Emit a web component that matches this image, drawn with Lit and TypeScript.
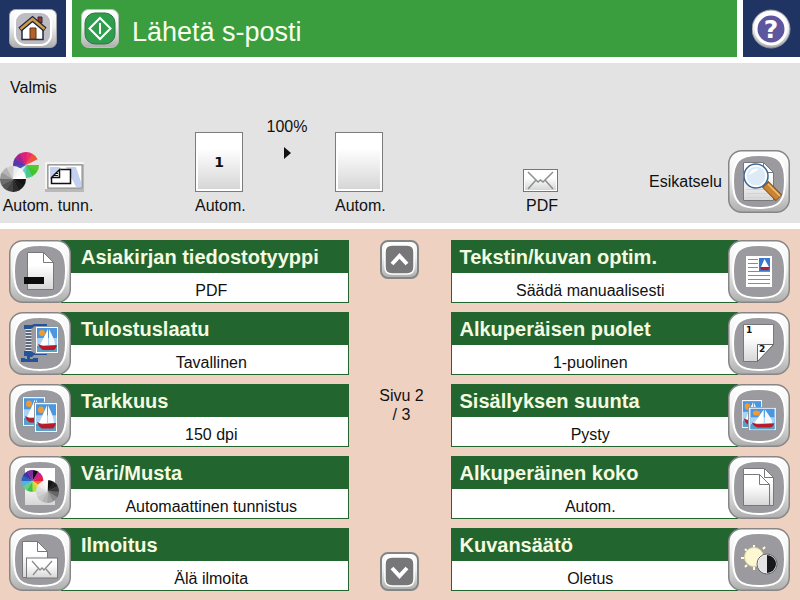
import { LitElement, html, svg, css, TemplateResult } from "lit";
import { customElement, property } from "lit/decorators.js";

type Drawing = TemplateResult;

/** A disc cut into equal coloured wedges. */
const wheel = (cx: number, cy: number, r: number, colors: string[]): Drawing => {
  const step = (Math.PI * 2) / colors.length;
  const at = (a: number) => `${(cx + r * Math.sin(a)).toFixed(2)} ${(cy - r * Math.cos(a)).toFixed(2)}`;
  return svg`${colors.map((c, i) =>
    c === "none"
      ? svg``
      : svg`<path fill=${c} d="M${cx} ${cy}L${at(i * step)}A${r} ${r} 0 0 1 ${at((i + 1) * step + 0.06)}Z"></path>`
  )}`;
};

const GREYS = ["#111", "#222", "#3a3a3a", "#666", "#8a8a8a", "#a2a2a2", "#b4b4b4", "#c4c4c4", "#d2d2d2", "#dedede", "#eee", "#f8f8f8"];

/** A small framed picture of a sailing boat. */
const photo = (x: number, y: number, w: number, h: number): Drawing => svg`
  <svg x=${x} y=${y} width=${w} height=${h} viewBox="0 0 24 28" preserveAspectRatio="none">
    <rect x="0.500" y="0.500" width="23" height="27" fill="#fff" stroke="#8f9aa8"></rect>
    <rect x="2" y="2" width="20" height="24" fill="#4a96e0"></rect>
    <path d="M2 12H22V20H2Z" fill="#a9d3f3"></path>
    <path d="M2 22H22V26H2Z" fill="#5aa0c4"></path>
    <circle cx="7" cy="7" r="3" fill="#f29a2b"></circle>
    <path d="M13 3L5 19H13Z" fill="#fff"></path>
    <path d="M14 3C17 9 20 14 20 19H14Z" fill="#f4f7fb"></path>
    <path d="M3 18L8 20L22 19C21 22 20 24 18 24H8C6 23 4 21 3 18Z" fill="#b81a28"></path>
  </svg>`;

const page = (x: number, y: number, r: number, b: number, f: number): Drawing => svg`
  <path d="M${x} ${y}H${r - f}L${r} ${y + f}V${b}H${x}Z" fill="url(#paper)" stroke="#77777c"></path>
  <path d="M${r - f} ${y}V${y + f}H${r}Z" fill="#fff" stroke="#77777c"></path>`;

const icons: Record<string, Drawing> = {
  file: svg`${page(18.5, 12.5, 44.5, 49.5, 10)}
    <rect x="15" y="37" width="20" height="7" fill="#0c0c0e"></rect>`,
  quality: svg`
    <path d="M19.500 15V43" stroke="#dfe6f2" stroke-width="6"></path>
    <path d="M16.500 19H22.500M16.500 22H22.500M16.500 25H22.500M16.500 28H22.500M16.500 31H22.500M16.500 34H22.500M16.500 37H22.500" stroke="#39424f" stroke-width="1.300"></path>
    <path d="M15 13H23L25 12H38V14H26L22 17H15ZM15 39H22L25 41H38V43H25L23 45H21V47H24V46H29V50H12V46H16V47H18V44H15Z" fill="#24539a"></path>
    ${photo(26, 14, 24, 28)}`,
  resolution: svg`${photo(13, 12, 24, 31)}${photo(25, 18, 24, 31)}`,
  color: svg`
    <path d="M16 12H46V49H16Z" fill="url(#paper)"></path>
    ${wheel(23.5, 25, 11, ["#111", "#c61f8e", "#e2204a", "#f2672a", "#f3d23a", "#b9dc3c", "#3fbf4d", "#66cf8c", "#55b5d8", "#2c63c0", "#4335a0", "#7c2ca0"])}
    ${wheel(38.5, 35.5, 11.5, GREYS)}`,
  notify: svg`${page(13.5, 13.5, 38.5, 49.5, 10)}
    <rect x="17.500" y="30" width="31" height="20" fill="url(#paper)" stroke="#77777c"></rect>
    <path d="M23 33L31 42L33 40L35 42L43 33M24 47L29 41M42 47L37 41" fill="none" stroke="#8c8c90" stroke-width="1.300"></path>`,
  optimize: svg`
    <rect x="18" y="16" width="26" height="31" fill="#fff"></rect>
    <path d="M20 19.500H30M20 23.500H30M20 27.500H30M20 31.500H42M20 35.500H42M20 39.500H42M20 43.500H42" stroke="#8a8a90"></path>
    <rect x="31" y="18" width="11" height="13" fill="#3a78cc"></rect>
    <path d="M36.500 19L33 27H41Z" fill="#fff"></path><path d="M32 27H42L40 30H33Z" fill="#b81a28"></path>`,
  sides: svg`
    <path d="M15.500 12.500H45.500V32.500L29.500 49.500H15.500Z" fill="url(#paper)" stroke="#77777c"></path>
    <path d="M29.500 49.500V32.500H45.500Z" fill="#fff" stroke="#66666a"></path>
    <text x="18" y="21" class="num">1</text><text x="31" y="40" class="num">2</text>`,
  orientation: svg`${photo(13, 15, 22, 30)}${photo(20, 23, 29, 24)}`,
  size: svg`${page(15.5, 12.5, 45.5, 49.5, 9)}${page(15.5, 18.5, 41.5, 49.5, 10)}`,
  adjust: svg`
    <path d="M26 17V19M26 39V42M13 30H16M17 21L19 23M35 21L37 19M17 39L19 37" stroke="#fffbe0" stroke-width="2"></path>
    <circle cx="26" cy="29" r="9.500" fill="#fdf8d2" stroke="#dcd6a4"></circle>
    <circle cx="39" cy="36" r="9.500" fill="#e4e4e6" stroke="#fff"></circle>
    <path d="M39 27A9 9 0 0 1 39 45Z" fill="#17181c"></path>
    <circle cx="39" cy="36" r="10" fill="none" stroke="#66666a"></circle>`,
  preview: svg`${page(15.5, 12.5, 45.5, 50.5, 10)}
    <path d="M18 39.500H42M18 43.500H42M18 47.500H42" stroke="#d4d4d8"></path>
    <path d="M37 34L51 48" stroke="#8a4e16" stroke-width="9"></path>
    <path d="M38 35L50.500 47.500" stroke="#c98432" stroke-width="7"></path>
    <path d="M40 34L52 46" stroke="#ecc27a" stroke-width="1.500"></path>
    <circle cx="28" cy="26" r="11" fill="#dcebf7" stroke="#fff" stroke-width="3"></circle>
    <circle cx="28" cy="26" r="12" fill="none" stroke="#3d6490" stroke-width="1.500"></circle>
    <path d="M21 25C22 20 26 18 31 19C28 21 25 23 21 25Z" fill="#fff"></path>`,
};

const gradients = svg`<defs>
  <linearGradient id="metal" x1="0" y1="0" x2="0" y2="1">
    <stop offset="0" stop-color="#fff"></stop><stop offset="0.450" stop-color="#f0f0f0"></stop>
    <stop offset="1" stop-color="#adadad"></stop>
  </linearGradient>
  <linearGradient id="paper" x1="0" y1="0" x2="0" y2="1">
    <stop offset="0.350" stop-color="#fff"></stop><stop offset="1" stop-color="#d6d6d6"></stop>
  </linearGradient>
</defs>`;

@customElement("key-icon")
export class KeyIcon extends LitElement {
  @property() name = "";
  static styles = css`
    :host { display: block; width: 62px; height: 63px; }
    .key { display: block; width: 100%; height: 100%; }
    .num { font: bold 9px "DejaVu Sans", sans-serif; fill: #111; }
  `;
  render() {
    return html`<svg class="key" viewBox="0 0 62 63" aria-hidden="true">
      ${gradients}
      <rect x="0.750" y="0.750" width="60.500" height="61.500" rx="13" fill="url(#metal)" stroke="#868686" stroke-width="1.500"></rect>
      <path d="M31 5C51 5 57 11 57 31C57 52 51 58 31 58C11 58 5 52 5 31C5 11 11 5 31 5Z" fill="#9b9a9f" stroke="#fff" stroke-width="2"></path>
      ${icons[this.name]}
    </svg>`;
  }
}

@customElement("option-key")
export class OptionKey extends LitElement {
  @property() icon = "";
  @property() label = "";
  @property() value = "";
  @property({ type: Boolean, reflect: true }) mirrored = false;
  static styles = css`
    :host { display: block; }
    button {
      display: grid; grid-template-columns: 62px 1fr; width: 100%; margin: 0; padding: 0;
      border: 0; background: none; color: #111; font: 16px/19px "Liberation Sans", Arial, sans-serif; cursor: pointer;
    }
    .box {
      grid-area: 1 / 1 / 2 / 3; display: grid; grid-template-rows: 32px 29px; margin-left: 52px;
      border: 1px solid #22652f; background: #fff;
    }
    .label {
      padding: 0 8px 0 19px; background: #22652f; color: #f4fbe0; text-align: left;
      font-weight: bold; font-size: 20px; line-height: 32px; white-space: nowrap;
    }
    .value { padding-left: 13px; line-height: 35px; height: 29px; text-align: center; }
    key-icon { grid-area: 1 / 1; }
    :host([mirrored]) button { grid-template-columns: 1fr 62px; }
    :host([mirrored]) .box { margin: 0 52px 0 0; }
    :host([mirrored]) .label { padding: 0 19px 0 8px; }
    :host([mirrored]) .value { padding: 0 8px 0 0; }
    :host([mirrored]) key-icon { grid-area: 1 / 2; }
  `;
  render() {
    return html`<button type="button">
      <span class="box"><span class="label">${this.label}</span><span class="value">${this.value}</span></span>
      <key-icon name=${this.icon}></key-icon>
    </button>`;
  }
}

const LEFT = [
  ["file", "Asiakirjan tiedostotyyppi", "PDF"],
  ["quality", "Tulostuslaatu", "Tavallinen"],
  ["resolution", "Tarkkuus", "150 dpi"],
  ["color", "Väri/Musta", "Automaattinen tunnistus"],
  ["notify", "Ilmoitus", "Älä ilmoita"],
];
const RIGHT = [
  ["optimize", "Tekstin/kuvan optim.", "Säädä manuaalisesti"],
  ["sides", "Alkuperäisen puolet", "1-puolinen"],
  ["orientation", "Sisällyksen suunta", "Pysty"],
  ["size", "Alkuperäinen koko", "Autom."],
  ["adjust", "Kuvansäätö", "Oletus"],
];

@customElement("app-root")
export class AppRoot extends LitElement {
  static styles = css`
    :host {
      display: block; min-height: 100vh; background: #efd1c2; color: #111;
      font: 16px/19px "Liberation Sans", Arial, sans-serif;
    }
    svg { display: block; }
    button { margin: 0; padding: 0; border: 0; background: none; color: inherit; font: inherit; cursor: pointer; }
    header { display: grid; grid-template-columns: 66px 1fr 57px; gap: 6px; height: 57px; background: #fff; }
    .corner { display: flex; align-items: center; justify-content: center; background: #203464; }
    .title { display: flex; align-items: center; gap: 13px; padding-left: 9px; background: #3a9e3e; }
    h1 { margin: 0; padding-top: 6px; font-size: 27px; line-height: 30px; font-weight: normal; color: #f8ffec; }
    .help { font: bold 25px "DejaVu Sans", sans-serif; fill: #fff; }
    .status { padding: 15px 10px 8px 0; border: solid #fff; border-width: 6px 0; background: #e3e3e3; }
    .state { margin: 0 0 20px 10px; }
    .job {
      display: grid; align-items: end; min-height: 98px;
      grid-template-columns: 96px 99fr 190px 138fr 38px 88fr 141px;
    }
    .cell { display: grid; gap: 4px; text-align: center; }
    .source { grid-column: 1; }
    .flow { grid-column: 3; align-self: stretch; display: grid; grid-template-columns: 50px 90px 50px; align-items: end; }
    .output { grid-column: 5; }
    .preview { grid-column: 7; display: flex; align-items: center; justify-content: space-between; margin-bottom: 2px; }
    .scale { display: grid; gap: 11px; justify-items: center; align-self: start; margin-right: 6px; }
    .thumb {
      box-sizing: border-box; width: 48px; height: 60px; padding: 2px; border: 1px solid #7c7c7c; background: #fff;
      font: bold 14px/54px "DejaVu Sans", sans-serif;
    }
    .sheet { height: 54px; background: linear-gradient(#fff 25%, #d6d6d6); }
    main { display: grid; grid-template-columns: 1fr 102px 1fr; padding: 11px 10px 9px 9px; }
    .options { display: grid; gap: 9px; }
    .paging { display: grid; grid-template-rows: 39px 5fr 38px 6fr 39px; justify-items: center; }
    .paging p { grid-row: 3; width: 50px; margin: 0; padding-left: 4px; text-align: center; }
    .down { grid-row: 5; }
  `;

  private arrow(d: string) {
    return html`<svg width="39" height="39" viewBox="0 0 39 39" aria-hidden="true">
      ${gradients}
      <rect x="1" y="1" width="37" height="37" rx="7" fill="url(#metal)" stroke="#858585" stroke-width="2"></rect>
      <path d="M12 5H27Q34 5 34 12V27Q34 34 27 34H12Q5 34 5 27V12Q5 5 12 5Z" fill="#77777a" stroke="#fff" stroke-width="1.500"></path>
      <path d=${d} fill="none" stroke="#fff" stroke-width="4"></path>
    </svg>`;
  }

  private options(list: string[][], mirrored: boolean) {
    return html`<div class="options">
      ${list.map(([icon, label, value]) => html`<option-key icon=${icon} label=${label} value=${value} ?mirrored=${mirrored}></option-key>`)}
    </div>`;
  }

  render() {
    return html`
      <header>
        <button class="corner" type="button" aria-label="Koti">
          <svg width="48" height="39" viewBox="0 0 48 39">
            ${gradients}
            <rect x="0.500" y="0.500" width="47" height="38" rx="6" fill="url(#metal)" stroke="#a4a4a8"></rect>
            <rect x="6" y="3" width="36" height="33" rx="10" fill="#bcbcc2" stroke="#fff" stroke-width="2"></rect>
            <path d="M29 8H33V14H29Z" fill="#9a3420" stroke="#222840"></path>
            <path d="M13 19L23.500 10L34 19V30.500H13Z" fill="#fff" stroke="#222840" stroke-width="1.500"></path>
            <path d="M21 19H27V30H21Z" fill="#b4622a" stroke="#5b3018"></path>
            <path d="M11 20.500L23.500 10L36 20.500" fill="none" stroke="#1d2340" stroke-width="5"></path>
            <path d="M11.500 20L23.500 10L35.500 20" fill="none" stroke="#cf9a44" stroke-width="2.500"></path>
          </svg>
        </button>
        <div class="title">
          <button type="button" aria-label="Käynnistä">
            <svg width="38" height="39" viewBox="0 0 38 39">
              ${gradients}
              <rect x="0.500" y="0.500" width="37" height="38" rx="7" fill="url(#metal)" stroke="#b9c4b9"></rect>
              <rect x="4" y="4" width="30" height="31" rx="10" fill="#2f9d4b" stroke="#2a7a3c"></rect>
              <path d="M19 9L29.500 19.500L19 30L8.500 19.500Z" fill="none" stroke="#fff" stroke-width="2"></path>
              <path d="M19 14V25" stroke="#fff" stroke-width="2"></path>
            </svg>
          </button>
          <h1>Lähetä s-posti</h1>
        </div>
        <button class="corner" type="button" aria-label="Ohje">
          <svg width="40" height="40" viewBox="0 0 40 40">
            ${gradients}
            <circle cx="19" cy="20" r="19" fill="url(#metal)" stroke="#8d929c"></circle>
            <circle cx="19" cy="20" r="15" fill="#5d579f" stroke="#fff" stroke-width="3"></circle>
            <text x="19" y="29" text-anchor="middle" class="help">?</text>
          </svg>
        </button>
      </header>
      <section class="status">
        <p class="state">Valmis</p>
        <div class="job">
          <div class="cell source">
            <svg width="96" height="41" viewBox="0 0 96 41" aria-hidden="true">
              ${gradients}
              ${wheel(26, 14, 13, ["#ee2f6c", "#f0513a", "none", "#55c92c", "#3fc437", "#4cc98a", "#5ad0dd", "#e3e3e3", "#3f4fb4", "#5a36a6", "#a12390", "#de1f7c"])}
              ${wheel(13, 28, 13, ["#eee", "#f6f6f6", "#fff", "#141414", "#1c1c1c", "#2c2c2c", "#444", "#555", "#6c6c6c", "#999", "#b4b4b4", "#cfcfcf"])}
              <path d="M45 12H84V41H45Z" fill="#b9b9b5"></path>
              <path d="M45 11H84V13H47V38H45Z" fill="#f4f4f0"></path>
              <path d="M48 14H82V37H48Z" fill="#fff" stroke="#85858c"></path>
              <path d="M50 16H60L50 29ZM66 16H76L81 31V36H76Z" fill="#c3d0f0"></path>
              <path d="M60.500 18.500H70.500V32.500H51.500V26.500L59.500 18.500V26.500H51.500" fill="#fff" stroke="#111" stroke-width="1.500"></path>
              <path d="M53 24.500H58M55 22.500H58" stroke="#111"></path>
            </svg>
            <span>Autom. tunn.</span>
          </div>
          <div class="flow">
            <div class="cell"><div class="thumb"><div class="sheet">1</div></div><span>Autom.</span></div>
            <div class="scale">
              <span>100%</span>
              <svg width="8" height="12" viewBox="0 0 8 12" aria-hidden="true"><path d="M1 0L8 6L1 12Z" fill="#111"></path></svg>
            </div>
            <div class="cell"><div class="thumb"><div class="sheet"></div></div><span>Autom.</span></div>
          </div>
          <div class="cell output">
            <svg width="35" height="23" viewBox="0 0 35 23" aria-hidden="true">
              ${gradients}
              <rect x="0.500" y="0.500" width="34" height="22" fill="#fff" stroke="#5f8468"></rect>
              <rect x="2" y="2" width="31" height="19" fill="url(#paper)"></rect>
              <path d="M5 3L15 13L17.500 11L20 13L30 3M5 20L13 11M30 20L22 11" fill="none" stroke="#8b908c" stroke-width="1.500"></path>
            </svg>
            <span>PDF</span>
          </div>
          <div class="preview">
            <label for="preview">Esikatselu</label>
            <button id="preview" type="button"><key-icon name="preview"></key-icon></button>
          </div>
        </div>
      </section>
      <main>
        ${this.options(LEFT, false)}
        <nav class="paging">
          <button type="button" aria-label="Edellinen sivu">${this.arrow("M12 24L19.500 16L27 24")}</button>
          <p>Sivu 2 / 3</p>
          <button class="down" type="button" aria-label="Seuraava sivu">${this.arrow("M12 16L19.500 24L27 16")}</button>
        </nav>
        ${this.options(RIGHT, true)}
      </main>
    `;
  }
}
